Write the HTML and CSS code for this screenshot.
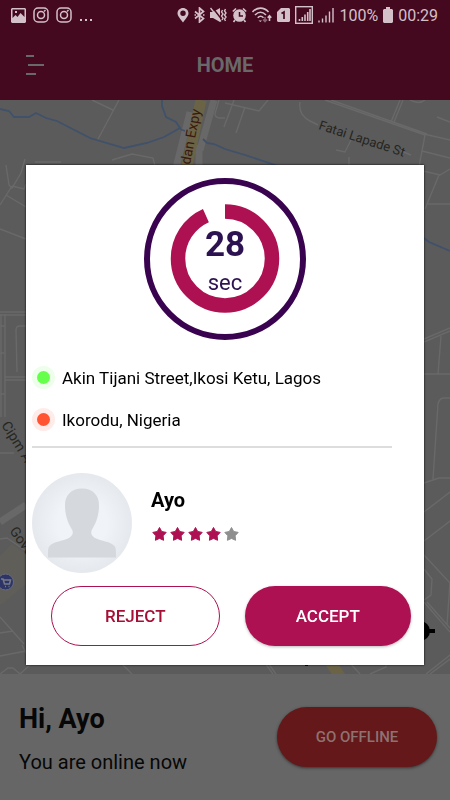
FILE: index.html
```html
<!DOCTYPE html>
<html lang="en">
<head>
<meta charset="utf-8">
<meta name="viewport" content="width=device-width, initial-scale=1">
<title>Home</title>
<link rel="stylesheet" href="styles.css">
</head>
<body>
<div class="app">
  <header class="top">
    <div class="status">
      <div class="status-side status-left">
        <svg width="15" height="15" viewBox="0 0 15 15"><path fill="currentColor" fill-rule="evenodd" d="M1 0h13l1 1v13l-1 1H1l-1-1V1zM1.500 1.500V10l3-3 2 2 3-4 4 4V1.500zM4 3h2v2H4z"/></svg>
        <svg width="16" height="16" viewBox="0 0 16 16" fill="none" stroke="currentColor" stroke-width="1.500"><rect x="1" y="1" width="14" height="14" rx="4"/><circle cx="8" cy="8" r="3.500"/><path d="M11 4.500l1.500-1.500"/></svg>
        <svg width="16" height="16" viewBox="0 0 16 16" fill="none" stroke="currentColor" stroke-width="1.500"><rect x="1" y="1" width="14" height="14" rx="4"/><circle cx="8" cy="8" r="3.500"/><path d="M11 4.500l1.500-1.500"/></svg>
        <svg width="14" height="16" viewBox="0 0 14 16" fill="currentColor"><path d="M1 12h2v2H1zM6 12h2v2H6zM11 12h2v2h-2z"/></svg>
      </div>
      <div class="status-side status-right">
        <svg width="12" height="16" viewBox="0 0 12 16"><path fill="currentColor" fill-rule="evenodd" d="M6 1C3 1 .5 3.300.5 6.300.5 9 3 11.500 6 15.500 9 11.500 11.500 9 11.500 6.300 11.500 3.300 9 1 6 1zM6 3.500a2.700 2.700 0 1 1 0 5.400 2.700 2.700 0 0 1 0-5.400z"/></svg>
        <svg width="11" height="16" viewBox="0 0 11 16" fill="none" stroke="currentColor" stroke-width="1.700"><path d="M1 4.500l8.500 7-4 3.500V1l4 3.500-8.500 7M.5 8h1.500M9 8h1.500"/></svg>
        <svg width="17" height="16" viewBox="0 0 17 16"><path fill="currentColor" d="M0 5h3l7-4v14l-7-4H0z"/><path d="M2 0l11 14" stroke="#44081f" stroke-width="1.500"/><path d="M.5 1l10.500 13.500M12.500 3l-1 2 1.500 2-1.500 2 1.500 2-1 2M15.500 2l-1 2 1.500 2-1.500 2 1.500 2-1.500 2 1 2" fill="none" stroke="currentColor" stroke-width="1.400"/></svg>
        <svg width="15" height="16" viewBox="0 0 15 16"><circle cx="7.500" cy="8.500" r="6.300" fill="currentColor"/><path d="M.8 4.500L4 1.500M14.200 4.500L11 1.500M3 13l-1.500 2M12 13l1.500 2" stroke="currentColor" stroke-width="1.700"/><path d="M7.500 5v4h3.500" fill="none" stroke="#44081f" stroke-width="1.500"/></svg>
        <svg width="20" height="16" viewBox="0 0 20 16" fill="none" stroke="currentColor" stroke-width="1.600"><path d="M.5 5C5-.2 12-.2 16.500 5M3 8c3.500-3.500 7.500-3.500 11 0M5.700 10.800c2-2 3.800-2 5.800 0"/><path d="M6.500 13.500h3.500l-1.700 1.500z" fill="currentColor" stroke="none"/><path d="M13 10v4M11 12.500l2 2 2-2" opacity=".5"/><path d="M17.500 14V8.500M15.700 10.800l1.800-2 1.800 2"/></svg>
        <svg width="13" height="16" viewBox="0 0 13 16"><path fill="currentColor" d="M4 1h8l1 1v12l-1 1H1l-1-1V5z"/><path d="M4.500 6.500L7 5v7" fill="none" stroke="#44081f" stroke-width="1.700"/></svg>
        <svg width="18" height="18" viewBox="0 0 18 18"><rect x=".7" y=".7" width="16.600" height="16.600" fill="none" stroke="currentColor" stroke-width="1.400"/><path d="M4.500 15v-2M7.300 15v-4M10 15V8.500M12.700 15V6M15 15V3" stroke="currentColor" stroke-width="1.600"/></svg>
        <svg width="16" height="16" viewBox="0 0 16 16"><path d="M1 15.500v-2M4.500 15.500v-4M8 15.500V8.500M11.500 15.500v-11M15 15.500V1" stroke="currentColor" stroke-width="1.400"/></svg>
        <span>100%</span>
        <svg width="10" height="16" viewBox="0 0 10 16"><path fill="currentColor" d="M3 0h4v2h2l1 1v12l-1 1H1l-1-1V3l1-1h2z"/></svg>
        <span>00:29</span>
      </div>
    </div>
    <div class="bar">
      <button class="menu" type="button" aria-label="Menu">
        <svg width="18" height="22" viewBox="0 0 18 22" stroke="currentColor" stroke-width="2"><path d="M0 2h8M2 11h16M0 20h10"/></svg>
      </button>
      <h1 class="title">HOME</h1>
    </div>
  </header>

  <main class="map">
    <svg class="map-art" viewBox="0 100 450 574" preserveAspectRatio="xMidYMid slice">
      <g class="land">
        <path d="M0 556l12-12 14 10v30L2 604H0z"/>
      </g>
      <g class="roads">
        <path d="M92 100l21 10M119 100l-22 41M112 160l20-6 21 4 3 12M35 162h26M6 165l3 20 3 3 9-15 4-14M12 186l12 3 2-5M12 186L0 205M6 195l20 12M0 229l26 10"/>
        <path d="M0 312h26M0 315h26M1 314v103M5 314v103M17 372l-1-42q0-4 4-4h6M5 377h21M5 380h21M0 326h4M0 353h4M0 394h4M0 453h14"/>
        <path d="M0 539l7-1 19 13M0 617l24 27M0 633l13-2M0 656l26-5M22 645l4 8M0 674l8-6h5l7 6M20 674l12-11M118 660l14 14"/>
        <path d="M234 100l-10 27M225 103l34 8 9-11M245 107l-9 26M219 100l-4 14q0 3 4 4h6M300 102q-2 13 10 19l8 4M325 100l100 35M331 100l96 34M400 100l-9 22M403 100l-9 22M410 100q9 5 15 0M437 117l13 5M424 134l26 6M425 135l-7 37M422 151l28 7M336 150l9 2 6-12M349 157v10M419 170l21 5 10-6M439 175l-14 34M428 204h22M411 155l-10-4"/>
        <path d="M424 339l26-11M424 342l26-11M441 336l-3 38M424 374h26M450 398h-7q-4 1-5 6l-5 75M424 483l15-5h11M424 512l26-20M424 541l26-20M424 555l26 28M424 569l8 10-1 16-7 5M424 602l26 30M427 602l23 26M450 582l-3 43M426 674l24-19M430 674l20-15M265 663l8 11M268 663l8 11M349 662l11 12M386 660v7l-16 7"/>
      </g>
      <g class="main-roads">
        <path class="side" d="M190 112l-15 60M214 100l-14 50M199 145v30"/>
        <path class="wide" d="M0 522l26-17"/>
        <path class="express" d="M201 100l-16 75M329 660l12 18"/>
      </g>
      <g class="rivers">
        <path d="M0 109l9 2 5 6h15l7-4 10 5 11 3 33 17 34 10 23-5 17-6 16-9-4-6-10-5-4-11v-7M180 129l5 2M203 139l4 4 7 1 11 5 20 6 36 12M424 238l5 4 21 9"/>
      </g>
      <g class="poi">
        <circle cx="5.500" cy="582" r="8"/>
        <path d="M1 579h2l1.500 5h5l1-4H3.500M5 586.500h1M8.500 586.500h1" fill="none" stroke="#777b88" stroke-width="1.500"/>
      </g>
      <g class="target"><circle cx="420" cy="631" r="10"/><path d="M428 629h7v4h-7zM305 660h3v6h-3z"/></g>
      <g class="labels">
        <text class="hwy" transform="translate(190 165) rotate(-79)">dan Expy</text>
        <text transform="translate(318 129) rotate(18)">Fatai Lapade St</text>
        <text class="street" transform="translate(1 425) rotate(58)">Cipm Ave</text>
        <text class="street" transform="translate(9 531) rotate(54)">Gover</text>
      </g>
    </svg>
  </main>

  <footer class="presence">
    <div>
      <h2 class="greeting">Hi, Ayo</h2>
      <p class="state">You are online now</p>
    </div>
    <button class="pill offline" type="button">GO OFFLINE</button>
  </footer>
</div>

<div class="overlay">
  <section class="dialog" role="dialog" aria-label="Ride request">
    <div class="timer">
      <svg width="162" height="162" viewBox="0 0 162 162" fill="none">
        <circle cx="81" cy="81" r="78" stroke="#3a0350" stroke-width="6"/>
        <circle cx="81" cy="80.500" r="47" stroke="#ad1152" stroke-width="14.500" pathLength="360" stroke-dasharray="336 24" transform="rotate(-90 81 80.500)"/>
      </svg>
      <div class="count"><strong>28</strong><span>sec</span></div>
    </div>
    <ul class="route">
      <li><i class="dot pickup"></i>Akin Tijani Street,Ikosi Ketu, Lagos</li>
      <li><i class="dot dropoff"></i>Ikorodu, Nigeria</li>
    </ul>
    <hr class="rule">
    <div class="rider">
      <svg width="100" height="100" viewBox="0 0 100 100">
        <defs><radialGradient id="halo"><stop offset=".5" stop-color="#f0f3f7"/><stop offset="1" stop-color="#e5e8ed"/></radialGradient></defs>
        <circle cx="50" cy="50" r="50" fill="url(#halo)"/>
        <path fill="#d5d8dd" d="M50 15.500c-11 0-17.500 7-17 18 .3 11 4 18 7 23 2 4 0 7-4 9-7 3-14 3-18 7-2 2-2 4-2 12h68c0-8 0-10-2-12-4-4-11-4-18-7-4-2-6-5-4-9 3-5 6.700-12 7-23 .5-11-6-18-17-18z"/>
      </svg>
      <div class="rider-info">
        <h2 class="name">Ayo</h2>
        <svg class="stars" width="90" height="16" viewBox="0 0 90 16" role="img" aria-label="4 out of 5">
          <defs><path id="star" stroke-width="1" stroke-linejoin="round" d="M8.500 1.500l2.200 4 4.500.9-3.100 3.400.5 4.500-4.100-1.900-4.100 1.900.5-4.500L1.800 6.400l4.500-.9z"/></defs>
          <g fill="#ad1152" stroke="#ad1152"><use href="#star"/><use href="#star" x="18"/><use href="#star" x="36"/><use href="#star" x="54"/></g>
          <use href="#star" x="72" fill="#8f8f8f" stroke="#8f8f8f"/>
        </svg>
      </div>
    </div>
    <div class="actions">
      <button class="pill reject" type="button">REJECT</button>
      <button class="pill accept" type="button">ACCEPT</button>
    </div>
  </section>
</div>
</body>
</html>
```

FILE: styles.css
```css
* { box-sizing: border-box; }

body {
  margin: 0;
  font-family: Roboto, "Liberation Sans", sans-serif;
  color: #000;
  background: #666;
}

h1, h2, p, ul { margin: 0; padding: 0; }
svg { display: block; flex: none; }
button { font: inherit; cursor: pointer; }

.app {
  display: grid;
  grid-template-rows: auto 1fr auto;
  min-height: 100vh;
}

/* Header */
.top { background: #44081f; }

.status {
  display: flex;
  justify-content: space-between;
  height: 30px;
  padding: 0 12px 0 11px;
  color: #d3c0c9;
  font-size: 16px;
}
.status-side { display: flex; align-items: center; }
.status-left { gap: 7px; }
.status-right { gap: 5px; }

.bar {
  display: grid;
  grid-template-columns: 1fr auto 1fr;
  align-items: center;
  height: 70px;
  padding: 0 26px;
  color: #696969;
}
.menu {
  justify-self: start;
  padding: 0;
  border: 0;
  background: none;
  color: inherit;
}
.title { font-size: 20px; font-weight: 700; }

/* Map */
.map { position: relative; background: #5b5b5b; overflow: hidden; }
.map-art { position: absolute; inset: 0; width: 100%; height: 100%; }
.land { fill: #605e59; }
.roads { fill: none; stroke: #696969; stroke-width: 1.4; }
.main-roads { fill: none; }
.side { stroke: #686868; stroke-width: 7; }
.wide { stroke: #686868; stroke-width: 7; }
.express { stroke: #6b6346; stroke-width: 11; }
.rivers { fill: none; stroke: #40516b; stroke-width: 1.8; }
.poi { fill: #2d3566; stroke: #686b7c; stroke-width: 1; }
.target { fill: #000; }
.labels { font-size: 13px; fill: #26261f; }
.labels .hwy { fill: #391a10; font-size: 14px; }
.labels .street { font-size: 14px; }

/* Footer */
.presence {
  display: flex;
  align-items: center;
  justify-content: space-between;
  height: 126px;
  padding: 0 13px 0 19px;
  background: #666;
}
.greeting { font-size: 27px; line-height: 34px; color: #070707; }
.state { margin-top: 14px; font-size: 20px; line-height: 24px; color: #070707; }
.presence > div { padding-top: 2px; }

.pill {
  height: 60px;
  padding: 0;
  border: 0;
  border-radius: 30px;
  font-weight: 500;
}
.offline {
  width: 160px;
  background: #651819;
  color: #8d7272;
  font-size: 15px;
  box-shadow: 0 1px 3px #333;
}

/* Request dialog */
.overlay {
  position: fixed;
  inset: 30px 0 0;
  display: flex;
  align-items: center;
  padding: 0 26px;
}
.dialog {
  flex: 1;
  padding: 13px 6px 19px;
  background: #fff;
  box-shadow: 0 0 2px #000;
}

.timer { display: grid; justify-items: center; }
.timer > * { grid-area: 1 / 1; }
.count {
  display: flex;
  flex-direction: column;
  align-items: center;
  padding-top: 47px;
  color: #2c1250;
}
.count strong { font-size: 35px; line-height: 40px; }
.count span { font-size: 22px; line-height: 36px; }

.route { margin-top: 26px; list-style: none; font-size: 17px; }
.route li {
  display: flex;
  align-items: center;
  gap: 7px;
  height: 23px;
}
.route li + li { margin-top: 19px; }
.dot {
  width: 23px;
  height: 23px;
  border: 5px solid;
  border-radius: 50%;
}
.pickup { background: #66ff4b; border-color: #edffea; }
.dropoff { background: #ff5533; border-color: #ffece8; }

.rule {
  height: 2px;
  margin: 15px 26px 25px 0;
  border: 0;
  background: #ddd;
}

.rider { display: flex; gap: 19px; }
.name { margin-top: 15px; font-size: 20px; line-height: 24px; }
.stars { margin-top: 14px; }

.actions {
  display: flex;
  gap: 25px;
  padding: 13px 7px 0 19px;
  font-size: 17px;
}
.actions .pill { flex: 1; }
.reject { border: 1px solid #ad1152; background: #fff; color: #a50f35; }
.accept { background: #ad1152; color: #fff; box-shadow: 0 1px 3px #bbb; }
```
